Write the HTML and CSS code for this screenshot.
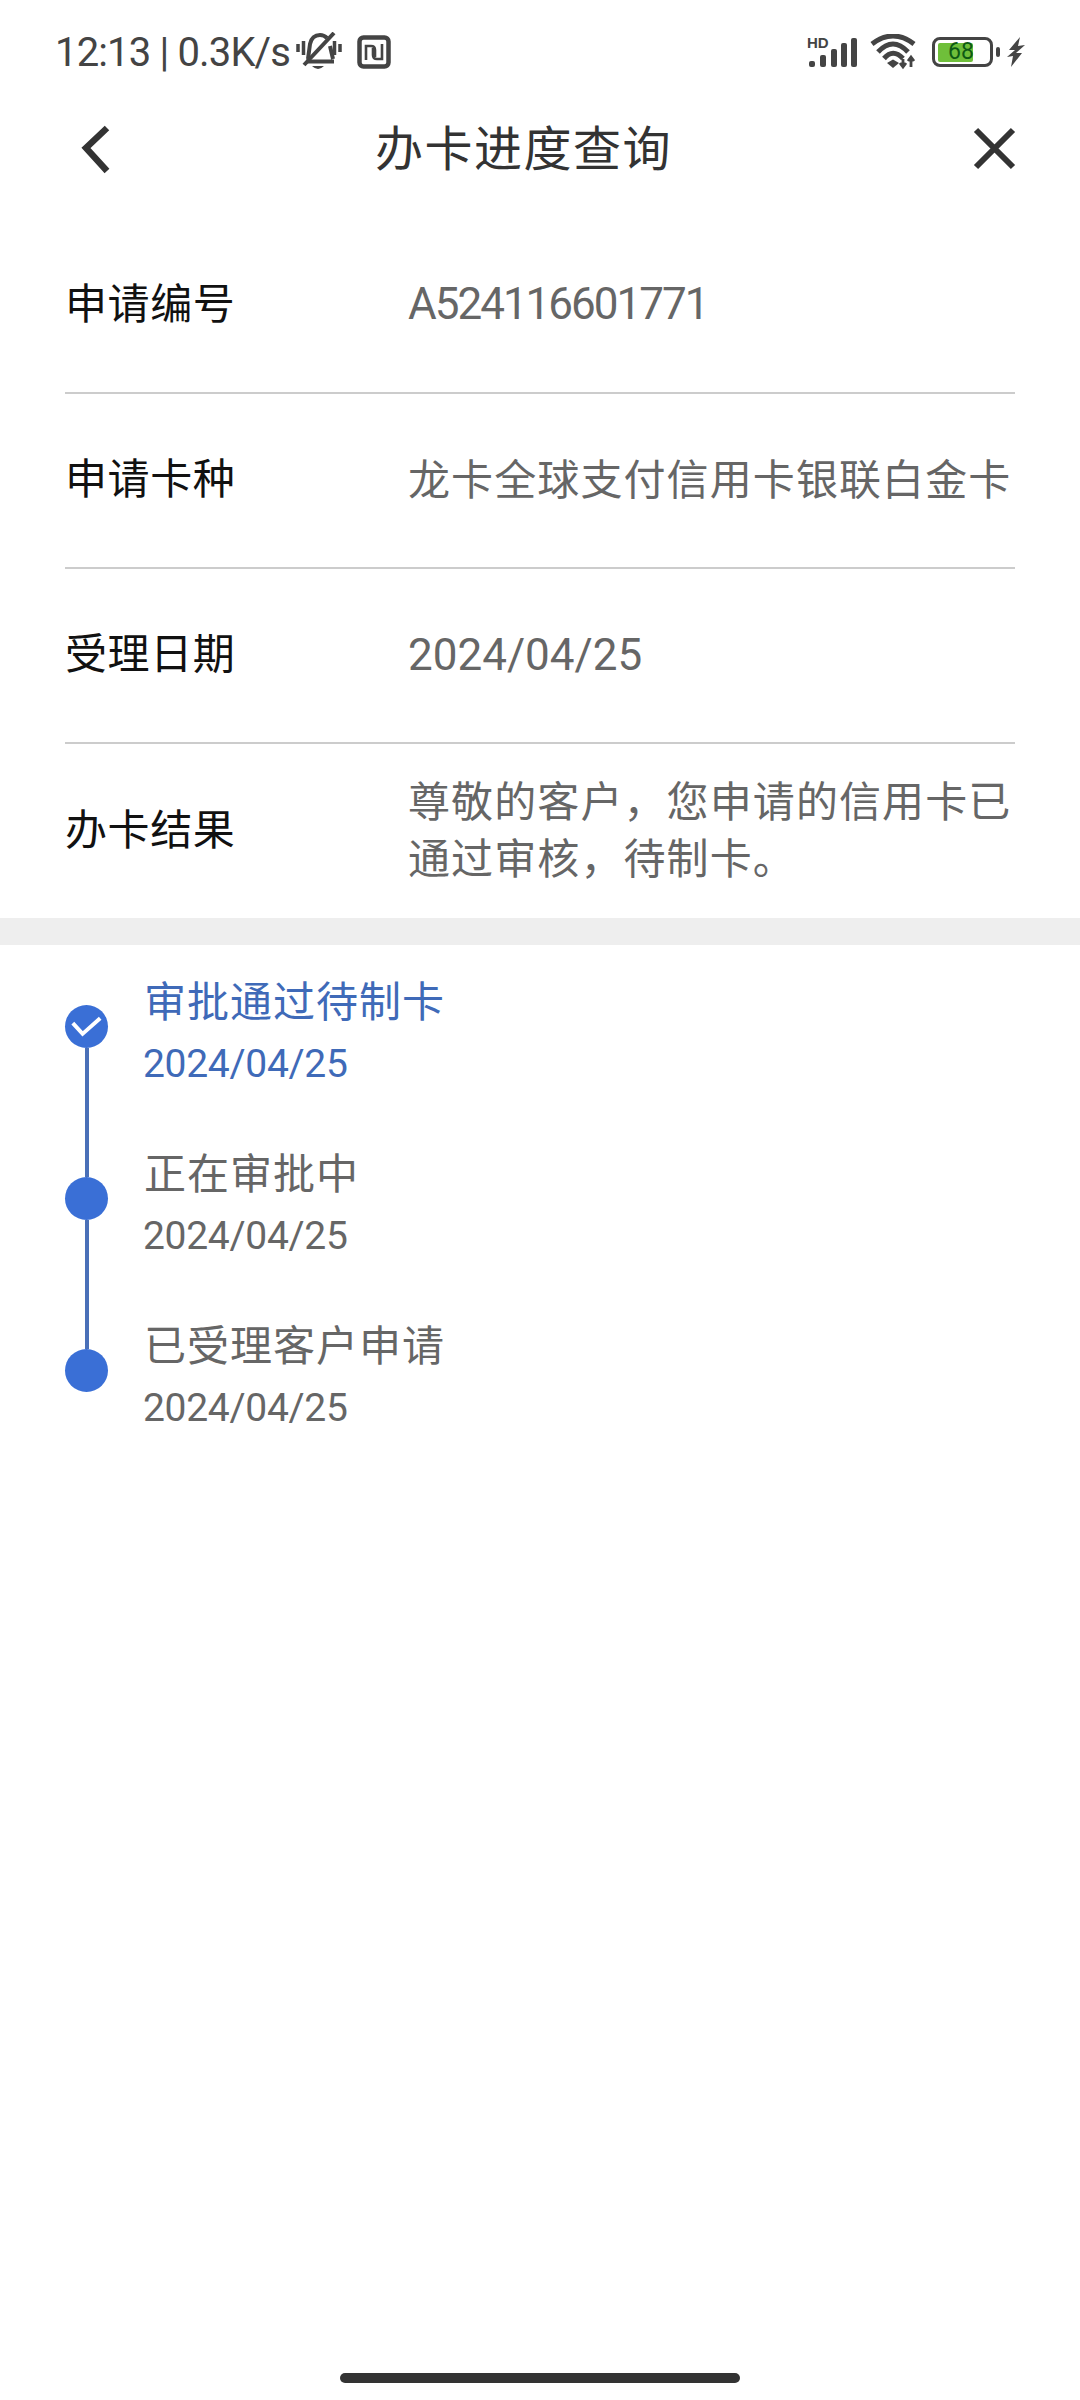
FILE: index.html
```html
<!DOCTYPE html>
<html lang="zh-CN">
<head>
    <meta charset="UTF-8">
    <meta name="viewport" content="width=device-width, initial-scale=1.0">
    <title>办卡进度查询</title>
    <link rel="stylesheet" href="styles.css">
</head>
<body>
    <div class="page">
        <div class="status-bar">
            <div class="status-left">
                <span class="status-text">12:13 | 0.3K/s</span>
                <svg class="icon-mute" viewBox="0 0 46 40" width="46" height="40">
                    <path d="M12 27 L14 12 Q16 3 24 3 Q28 3 31 6 M34 14 L37 27 M10 29.5 H38" fill="none" stroke="#444" stroke-width="4"/>
                    <path d="M8 33 L38 1" stroke="#444" stroke-width="4"/>
                    <path d="M16 34 H28 Q22 40 16 34 Z" fill="#444"/>
                    <path d="M2 12 V20 M7.5 9 V23 M38.5 9 V23 M44 12 V20" stroke="#444" stroke-width="3.5"/>
                </svg>
                <svg class="icon-nfc" viewBox="0 0 34 34" width="34" height="34">
                    <rect x="2.5" y="2.5" width="29" height="29" rx="4" fill="none" stroke="#444" stroke-width="4.5"/>
                    <path d="M9 25 V11 H14 Q18 11 18 15 V22 M25 9 V24 H20 Q16 24 16 20 V13" fill="none" stroke="#444" stroke-width="2.6"/>
                </svg>
            </div>
            <div class="status-right">
                <svg class="icon-signal" viewBox="0 0 52 34" width="52" height="34">
                    <text x="1" y="13" class="hd-label">HD</text>
                    <rect x="3" y="26" width="6" height="6" rx="2" fill="#444"/>
                    <rect x="14" y="20" width="6" height="12" rx="2" fill="#444"/>
                    <rect x="25" y="14" width="6" height="18" rx="2" fill="#444"/>
                    <rect x="35" y="8" width="6" height="24" rx="2" fill="#444"/>
                    <rect x="45" y="3" width="6" height="29" rx="2" fill="#444"/>
                </svg>
                <svg class="icon-wifi" viewBox="0 0 48 36" width="48" height="36">
                    <path d="M2 10 Q23 -6 44 10 M8 18 Q23 2 38 18 M14 24.5 Q23 14 33 24.5" fill="none" stroke="#444" stroke-width="5"/>
                    <path d="M17 29 L23 25.5 L29 29 L23 34 Z" fill="#444"/>
                    <path d="M33 25 V33 M41 23 V33 M30 29 L33 33 L36 29 M38 27 L41 23 L44 27" fill="none" stroke="#444" stroke-width="2.8"/>
                </svg>
                <div class="battery">
                    <div class="battery-body">
                        <div class="battery-fill"></div>
                        <span class="battery-num">68</span>
                    </div>
                    <div class="battery-cap"></div>
                </div>
                <svg class="icon-bolt" viewBox="0 0 18 30" width="18" height="30">
                    <path d="M13 0 L2 13 H8 L0 20 L6 19 L4 30 L15 16 H9 L18 8 L11 9 Z" fill="#444"/>
                </svg>
            </div>
        </div>

        <div class="nav-bar">
            <svg class="nav-back" viewBox="0 0 44 60" width="44" height="60">
                <path d="M32 10 L11 30 L32 53" fill="none" stroke="#333" stroke-width="6.5"/>
            </svg>
            <h1 class="nav-title">办卡进度查询</h1>
            <svg class="nav-close" viewBox="0 0 43 43" width="43" height="43">
                <path d="M3 3 L40 40 M40 3 L3 40" fill="none" stroke="#333" stroke-width="6"/>
            </svg>
        </div>

        <div class="info-list">
            <div class="info-row">
                <div class="info-label">申请编号</div>
                <div class="info-value info-code">A524116601771</div>
            </div>
            <div class="info-row">
                <div class="info-label">申请卡种</div>
                <div class="info-value">龙卡全球支付信用卡银联白金卡</div>
            </div>
            <div class="info-row">
                <div class="info-label">受理日期</div>
                <div class="info-value info-date">2024/04/25</div>
            </div>
            <div class="info-row">
                <div class="info-label">办卡结果</div>
                <div class="info-value">尊敬的客户，您申请的信用卡已通过审核，待制卡。</div>
            </div>
        </div>

        <div class="band"></div>

        <div class="timeline">
            <div class="step step-current">
                <div class="rail">
                    <div class="dot">
                        <svg viewBox="0 0 44 44" width="44" height="44">
                            <path d="M8 18 L18 29 L36 13" fill="none" stroke="#fff" stroke-width="4"/>
                        </svg>
                    </div>
                    <div class="rail-line"></div>
                </div>
                <div class="step-text">
                    <div class="step-title">审批通过待制卡</div>
                    <div class="step-date">2024/04/25</div>
                </div>
            </div>
            <div class="step">
                <div class="rail">
                    <div class="dot"></div>
                    <div class="rail-line"></div>
                </div>
                <div class="step-text">
                    <div class="step-title">正在审批中</div>
                    <div class="step-date">2024/04/25</div>
                </div>
            </div>
            <div class="step">
                <div class="rail">
                    <div class="dot"></div>
                </div>
                <div class="step-text">
                    <div class="step-title">已受理客户申请</div>
                    <div class="step-date">2024/04/25</div>
                </div>
            </div>
        </div>

        <div class="home-wrap">
            <div class="home-bar"></div>
        </div>
    </div>
</body>
</html>
```

FILE: styles.css
```css
body {
    margin: 0;
    background-color: #fff;
    font-family: Roboto, "Noto Sans CJK SC", sans-serif;
    color: #333;
}
.page {
    width: 1080px;
    height: 2400px;
    display: flex;
    flex-direction: column;
    overflow: hidden;
}
.status-bar {
    height: 104px;
    padding: 0 55px 0 55px;
    display: flex;
    justify-content: space-between;
    align-items: center;
    box-sizing: border-box;
}
.status-left, .status-right {
    display: flex;
    align-items: center;
}
.status-text {
    font-size: 40px;
    letter-spacing: -0.85px;
    color: #444;
    white-space: nowrap;
}
.icon-mute {
    margin-left: 6px;
}
.icon-nfc {
    margin-left: 15px;
}
.hd-label {
    font-family: "Liberation Sans", sans-serif;
    font-size: 15px;
    font-weight: 700;
    fill: #444;
}
.icon-wifi {
    margin-left: 12px;
}
.battery {
    margin-left: 14px;
    display: flex;
    align-items: center;
}
.battery-body {
    width: 55px;
    height: 24px;
    border: 3px solid #444;
    border-radius: 8px;
    position: relative;
    display: flex;
    align-items: center;
}
.battery-fill {
    width: 35px;
    height: 19px;
    margin-left: 3px;
    background-color: #6fbf3a;
    border-radius: 2px;
}
.battery-num {
    position: absolute;
    left: 13px;
    top: 0;
    font-size: 23px;
    line-height: 24px;
    color: #0d5a14;
}
.battery-cap {
    width: 4px;
    height: 10px;
    margin-left: 3px;
    background-color: #444;
    border-radius: 2px;
}
.icon-bolt {
    margin-left: 7px;
}
.nav-bar {
    height: 88px;
    padding: 0 64px 0 75px;
    display: flex;
    align-items: center;
}
.nav-title {
    flex: 1;
    margin: 0 0 0 256px;
    padding-bottom: 6px;
    font-size: 48px;
    font-weight: 400;
    letter-spacing: 1.5px;
    color: #333;
}
.info-list {
    margin-top: 27px;
    padding: 0 65px;
}
.info-row {
    height: 175px;
    display: flex;
    align-items: center;
    border-bottom: 2px solid #ccc;
    box-sizing: border-box;
}
.info-row:last-child {
    height: 174px;
    border-bottom: none;
}
.info-label {
    width: 343px;
    flex-shrink: 0;
    padding-bottom: 2px;
    font-size: 42px;
    line-height: 57px;
    letter-spacing: 0.6px;
    color: #111;
}
.info-value {
    font-size: 42px;
    line-height: 57px;
    letter-spacing: 1.1px;
    color: #666;
}
.info-date {
    font-size: 44px;
    letter-spacing: 0;
}
.info-code {
    padding-bottom: 2px;
    font-size: 44px;
    letter-spacing: -2px;
}
.band {
    height: 27px;
    background-color: #eee;
}
.timeline {
    padding: 60px 0 0 65px;
}
.step {
    height: 172px;
    display: flex;
}
.rail {
    width: 43px;
    display: flex;
    flex-direction: column;
    align-items: center;
}
.dot {
    width: 43px;
    height: 43px;
    flex-shrink: 0;
    border-radius: 50%;
    background-color: #3a6fd6;
    display: flex;
    align-items: center;
    justify-content: center;
}
.rail-line {
    width: 4px;
    flex: 1;
    background-color: #4a70b8;
}
.step-text {
    margin: -32px 0 0 36px;
}
.step-title {
    font-size: 42px;
    line-height: 60px;
    letter-spacing: 1px;
    color: #666;
}
.step-date {
    margin-top: 1px;
    margin-left: -1px;
    font-size: 39px;
    line-height: 60px;
    letter-spacing: -0.3px;
    color: #666;
}
.step-current .step-title, .step-current .step-date {
    color: #3f6ab8;
}
.home-wrap {
    margin-top: auto;
    padding-bottom: 17px;
    display: flex;
    justify-content: center;
}
.home-bar {
    width: 400px;
    height: 10px;
    border-radius: 5px;
    background-color: #333;
}
```
